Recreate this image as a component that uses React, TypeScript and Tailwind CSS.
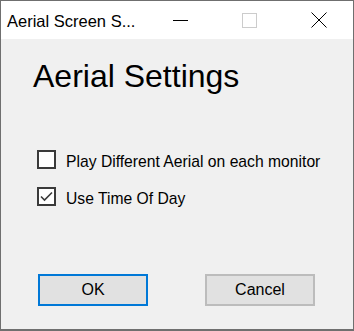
import React, { useState } from 'react';

const font = { fontFamily: '"Liberation Sans", Arial, sans-serif' };

function TitleButton({ children }: { children: React.ReactNode }) {
  return <div className="flex h-full w-[69px] items-center justify-center">{children}</div>;
}

function CheckRow({ label, checked, onToggle }: { label: string; checked: boolean; onToggle: () => void }) {
  return (
    <label className="ml-[4px] flex h-[19px] cursor-default items-center" onClick={onToggle}>
      <span className="flex h-[19px] w-[19px] shrink-0 items-center justify-center border-2 border-[#3a3a3a] bg-white">
        {checked && (
          <svg width="15" height="15" viewBox="0 0 15 15" fill="none">
            <path d="M2 7.5 L5.5 11 L13 3.5" stroke="#3a3a3a" strokeWidth="1.6" />
          </svg>
        )}
      </span>
      <span className="ml-[10px] pt-[3px] text-[15.7px] leading-[19px] text-black">{label}</span>
    </label>
  );
}

export default function App() {
  const [multi, setMulti] = useState(false);
  const [timeOfDay, setTimeOfDay] = useState(true);

  return (
    <div
      className="flex h-[331px] w-[354px] flex-col border border-b-2 border-[#6f6f6f] bg-[#f0f0f0]"
      style={font}
    >
      <div className="flex h-[38px] shrink-0 items-center bg-white">
        <span className="pl-[6px] pt-[3px] text-[16.5px] text-black">Aerial Screen S...</span>
        <div className="ml-auto flex h-full">
          <TitleButton>
            <svg width="15" height="15" viewBox="0 0 15 15">
              <path d="M0 7.5 H15" stroke="#000" strokeWidth="1" />
            </svg>
          </TitleButton>
          <TitleButton>
            <svg width="15" height="15" viewBox="0 0 15 15" fill="none">
              <rect x="0.5" y="0.5" width="14" height="14" stroke="#cccccc" strokeWidth="1" />
            </svg>
          </TitleButton>
          <TitleButton>
            <svg width="16" height="16" viewBox="0 0 16 16">
              <path d="M0.5 0.5 L15.5 15.5 M15.5 0.5 L0.5 15.5" stroke="#000" strokeWidth="1" />
            </svg>
          </TitleButton>
        </div>
      </div>

      <div className="flex flex-1 flex-col pl-[32px] pt-[21px]">
        <h1 className="text-[32px] leading-[32px] text-black">Aerial Settings</h1>

        <div className="mt-[58px] flex flex-col gap-[18px]">
          <CheckRow label="Play Different Aerial on each monitor" checked={multi} onToggle={() => setMulti(!multi)} />
          <CheckRow label="Use Time Of Day" checked={timeOfDay} onToggle={() => setTimeOfDay(!timeOfDay)} />
        </div>

        <div className="mt-[68px] ml-[5px] flex gap-[57px]">
          <button className="h-[32px] w-[110px] border-2 border-[#0078d7] bg-[#e1e1e1] text-[16px] text-black">
            OK
          </button>
          <button className="h-[32px] w-[110px] border-2 border-[#bcbcbc] bg-[#e1e1e1] text-[16px] text-black">
            Cancel
          </button>
        </div>
      </div>
    </div>
  );
}
